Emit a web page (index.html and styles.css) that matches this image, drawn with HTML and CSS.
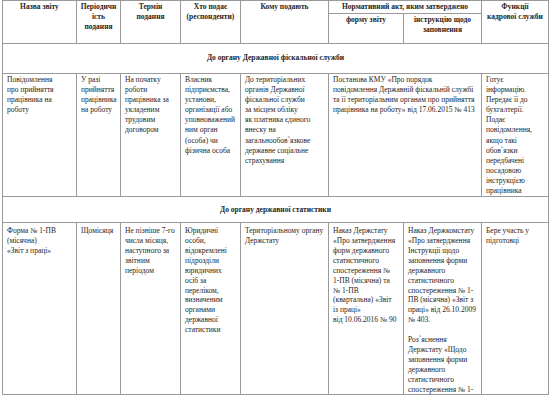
FILE: index.html
```html
<!DOCTYPE html>
<html lang="uk">
<head>
<meta charset="utf-8">
<title>Звіти</title>
<link rel="stylesheet" href="styles.css">
</head>
<body>
<div class="sheet">
<table class="report">
<colgroup>
<col class="c1"><col class="c2"><col class="c3"><col class="c4"><col class="c5"><col class="c6"><col class="c7"><col class="c8">
</colgroup>
<thead>
<tr class="h1">
<th rowspan="2">Назва звіту</th>
<th rowspan="2">Періодичн<br>ість<br>подання</th>
<th rowspan="2">Термін<br>подання</th>
<th rowspan="2">Хто подає<br>(респонденти)</th>
<th rowspan="2">Кому подають</th>
<th colspan="2">Нормативний акт, яким затверджено</th>
<th rowspan="2">Функції<br>кадрової служби</th>
</tr>
<tr class="h2">
<th>форму звіту</th>
<th>інструкцію щодо<br>заповнення</th>
</tr>
</thead>
<tbody>
<tr class="sec sec1">
<td colspan="8">До органу Державної фіскальної служби</td>
</tr>
<tr class="r1">
<td>Повідомлення<br>про прийняття<br>працівника на<br>роботу</td>
<td>У разі<br>прийняття<br>працівника<br>на роботу</td>
<td>На початку<br>роботи<br>працівника за<br>укладеним<br>трудовим<br>договором</td>
<td>Власник<br>підприємства,<br>установи,<br>організації або<br>уповноважений<br>ним орган<br>(особа) чи<br>фізична особа</td>
<td>До територіальних<br>органів Державної<br>фіскальної служби<br>за місцем обліку<br>як платника єдиного<br>внеску на<br>загальнообов`язкове<br>державне соціальне<br>страхування</td>
<td colspan="2">Постанова КМУ «Про порядок<br>повідомлення Державній фіскальній службі<br>та її територіальним органам про прийняття<br>працівника на роботу» від 17.06.2015 № 413</td>
<td>Готує<br>інформацію.<br>Передає її до<br>бухгалтерії.<br>Подає<br>повідомлення,<br>якщо такі<br>обов`язки<br>передбачені<br>посадовою<br>інструкцією<br>працівника</td>
</tr>
<tr class="sec sec2">
<td colspan="8">До органу державної статистики</td>
</tr>
<tr class="r2">
<td>Форма № 1-ПВ<br>(місячна)<br>«Звіт з праці»</td>
<td>Щомісяця</td>
<td>Не пізніше 7-го<br>числа місяця,<br>наступного за<br>звітним<br>періодом</td>
<td>Юридичні<br>особи,<br>відокремлені<br>підрозділи<br>юридичних<br>осіб за<br>переліком,<br>визначеним<br>органами<br>державної<br>статистики</td>
<td>Територіальному органу<br>Держстату</td>
<td>Наказ Держстату<br>«Про затвердження<br>форм державного<br>статистичного<br>спостереження №<br>1-ПВ (місячна) та<br>№ 1-ПВ<br>(квартальна) «Звіт<br>із праці»<br>від 10.06.2016 № 90</td>
<td>Наказ Держкомстату<br>«Про затвердження<br>Інструкції щодо<br>заповнення форми<br>державного<br>статистичного<br>спостереження № 1-<br>ПВ (місячна) «Звіт з<br>праці» від 26.10.2009<br>№ 403.<br><br>Роз`яснення<br>Держстату «Щодо<br>заповнення форми<br>державного<br>статистичного<br>спостереження № 1-</td>
<td>Бере участь у<br>підготовці</td>
</tr>
</tbody>
</table>
</div>
</body>
</html>
```

FILE: styles.css
```css
html, body {
  margin: 0;
  padding: 0;
  background: #ffffff;
}

.sheet {
  margin-left: 2px;
  width: 547px;
  height: 395px;
  overflow: hidden;
  border-bottom: 1px solid #9a9a9a;
  box-sizing: border-box;
}

.report {
  border-collapse: collapse;
  table-layout: fixed;
  width: 546px;
  font-family: "Liberation Serif", "Times New Roman", serif;
  font-size: 7.5px;
  line-height: 10.1px;
  color: #1e1e1e;
}

.c1 { width: 74px; }
.c2 { width: 44px; }
.c3 { width: 60px; }
.c4 { width: 60px; }
.c5 { width: 88px; }
.c6 { width: 75px; }
.c7 { width: 78px; }
.c8 { width: 67px; }

.report th,
.report td {
  border: 1px solid #9a9a9a;
  white-space: nowrap;
  overflow: hidden;
}

.report th {
  font-weight: bold;
  text-align: center;
  vertical-align: top;
  padding: 1px 2px 0;
}

.h1 { height: 13px; }
.h2 { height: 30px; }

.report td {
  vertical-align: top;
  text-align: left;
  padding: 1px 3px 0 4px;
}

.sec td {
  font-weight: bold;
  text-align: center;
  vertical-align: middle;
  padding: 0;
}

.sec1 { height: 30px; }
.sec2 { height: 26px; }
.r1 { height: 123px; }
.r2 td {
  padding-top: 3px;
  line-height: 9.9px;
}
```
